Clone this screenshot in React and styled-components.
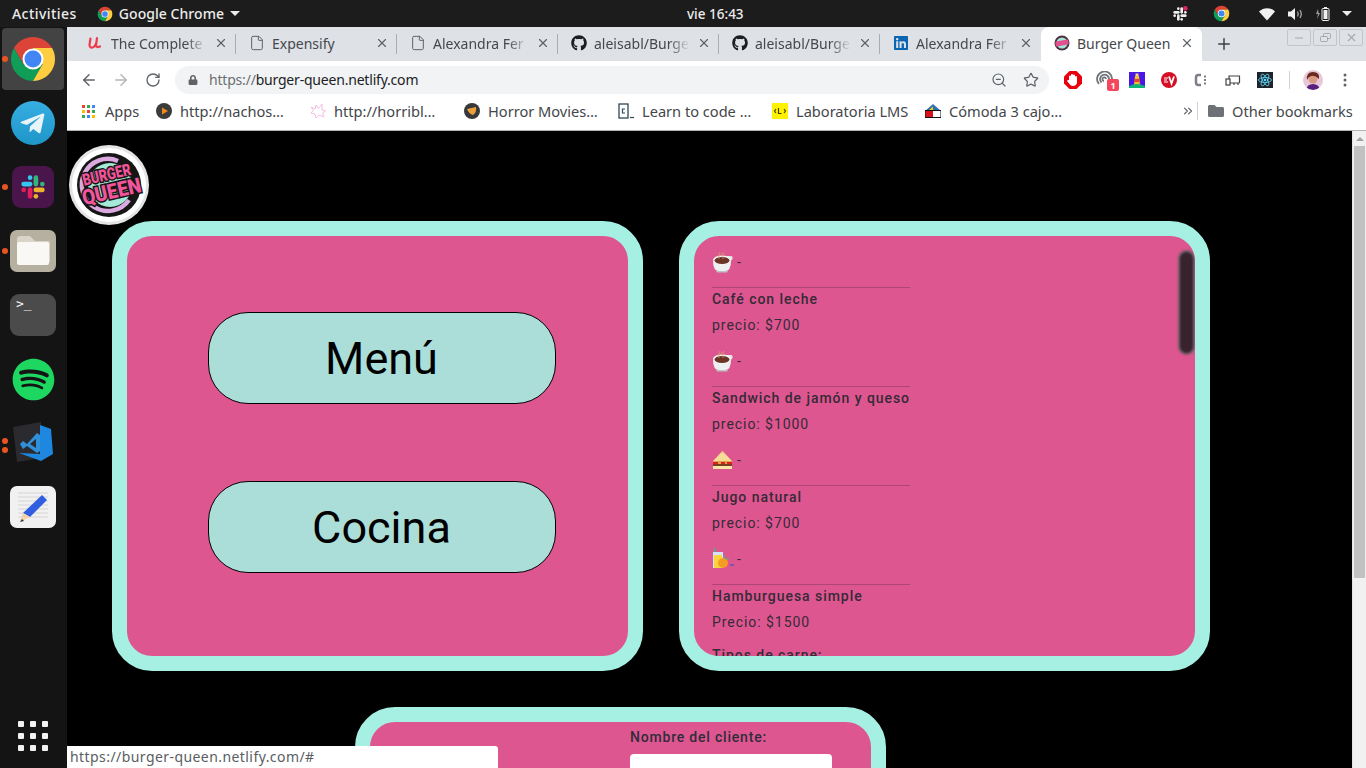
import React from 'react';
import styled, { createGlobalStyle } from 'styled-components';
import { ArrowLeft, ArrowRight, RotateCw, ZoomOut, Star, X, Plus, File, Minus, ChevronsRight } from 'lucide-react';
import { FaGithub, FaLinkedin, FaSpotify, FaTelegramPlane, FaFolder, FaLock } from 'react-icons/fa';

const GlobalStyle = createGlobalStyle`
  html, body {
    margin: 0;
    height: 100%;
    overflow: hidden;
    background: #000;
  }
  * { box-sizing: border-box; }
`;

const Root = styled.div`
  position: relative;
  width: 1366px;
  height: 768px;
  display: flex;
  flex-direction: column;
  overflow: hidden;
  font-family: "Noto Sans", "Open Sans", sans-serif;
`;

/* ---------- gnome top bar ---------- */

const TopBar = styled.div`
  height: 27px;
  flex: none;
  display: flex;
  align-items: center;
  background: #1c1c1c;
  color: #ececec;
  font-size: 14px;
  font-weight: 500;
`;

const TopLeft = styled.div`
  width: 687px;
  display: flex;
  align-items: center;
  padding-left: 12px;
`;

const Activities = styled.span`
  letter-spacing: 0.45px;
`;

const AppMenu = styled.div`
  display: flex;
  align-items: center;
  gap: 6px;
  margin-left: 20px;
  letter-spacing: 0.05px;
`;

const Caret = styled.span`
  width: 0;
  height: 0;
  border-left: 5px solid transparent;
  border-right: 5px solid transparent;
  border-top: 5px solid #ececec;
`;

const Clock = styled.div`
  width: 60px;
  white-space: nowrap;
  font-size: 13.5px;
`;

const Tray = styled.div`
  display: flex;
  align-items: center;
  margin-left: 425px;
`;

const TraySlot = styled.div`
  width: ${p => p.$w}px;
  display: flex;
  align-items: center;
`;

/* ---------- dock ---------- */

const Body = styled.div`
  flex: 1;
  min-height: 0;
  display: flex;
`;

const Dock = styled.div`
  width: 67px;
  flex: none;
  display: flex;
  flex-direction: column;
  align-items: center;
  padding-bottom: 17px;
  background: #141414;
`;

const DockItem = styled.div`
  position: relative;
  width: 67px;
  height: 64px;
  flex: none;
  display: flex;
  align-items: center;
  justify-content: center;
  padding-right: 1px;
`;

const ActiveTile = styled.div`
  width: 62px;
  height: 62px;
  display: flex;
  align-items: center;
  justify-content: center;
  background: #434343;
  border-radius: 4px;
`;

const RunDot = styled.span`
  position: absolute;
  left: 2px;
  top: ${p => p.$top}px;
  width: 6px;
  height: 6px;
  border-radius: 50%;
  background: #e95420;
`;

const RoundIcon = styled.div`
  width: 44px;
  height: 44px;
  border-radius: 50%;
  display: flex;
  align-items: center;
  justify-content: center;
  background: linear-gradient(180deg, #37aee2, #1e96c8);
  color: #e8f4fa;
  padding-right: 2px;
`;

const SquareIcon = styled.div`
  width: ${p => p.$size}px;
  height: ${p => p.$size2 || p.$size}px;
  display: flex;
  align-items: center;
  justify-content: center;
  border-radius: 9px;
  background: ${p => p.$bg};
`;

const TerminalPrompt = styled.span`
  width: 100%;
  height: 100%;
  padding: 2px 0 0 6px;
  color: #f4f4f4;
  font: 13px "DejaVu Sans Mono", monospace;
`;

const AppGrid = styled.div`
  margin-top: auto;
  padding-right: 1px;
  display: grid;
  grid-template-columns: repeat(3, 6px);
  gap: 6px;
`;

const AppDot = styled.span`
  width: 6px;
  height: 6px;
  border-radius: 1px;
  background: #f2f2f2;
`;

/* ---------- browser chrome ---------- */

const Browser = styled.div`
  flex: 1;
  min-width: 0;
  display: flex;
  flex-direction: column;
`;

const TabStrip = styled.div`
  height: 34px;
  flex: none;
  display: flex;
  padding-left: 8px;
  background: #dee1e6;
`;

const Tab = styled.div`
  position: relative;
  width: 161px;
  height: 34px;
  flex: none;
  display: flex;
  align-items: center;
  gap: 7px;
  padding: 0 8px 2px 13px;
  color: #45484c;
  font-size: 14px;
  background: ${p => (p.$active ? '#fff' : 'transparent')};
  border-radius: ${p => (p.$active ? '8px 8px 0 0' : '0')};

  &::after {
    content: '';
    display: ${p => (p.$plain ? 'none' : 'block')};
    position: absolute;
    right: 0;
    top: 7px;
    width: 1px;
    height: 20px;
    background: #a9acb1;
  }
`;

const TabTitle = styled.span`
  flex: 1;
  min-width: 0;
  overflow: hidden;
  white-space: nowrap;
  ${p => !p.$full && 'mask-image: linear-gradient(90deg, #000 78%, transparent 100%);'}
`;

const NewTab = styled.div`
  width: 44px;
  display: flex;
  align-items: center;
  justify-content: center;
  color: #3c4043;
`;

const WindowButtons = styled.div`
  display: flex;
  gap: 2px;
  margin-left: auto;
  padding: 2px 3px 0 0;
`;

const WindowButton = styled.div`
  width: 24px;
  height: 17px;
  display: flex;
  align-items: center;
  justify-content: center;
  color: #a6a8ad;
  border: 1px solid #c3c5ca;
  border-radius: 2px;
`;

const Toolbar = styled.div`
  height: 33px;
  flex: none;
  display: flex;
  padding-top: 5px;
  background: #fff;
`;

const NavButton = styled.div`
  width: 32px;
  height: 28px;
  display: flex;
  align-items: center;
  justify-content: center;
  color: ${p => (p.$off ? '#b4b7bb' : '#5f6368')};
`;

const NavGroup = styled.div`
  display: flex;
  padding-left: 6px;
  margin-right: 6px;
`;

const Omnibox = styled.div`
  width: 874px;
  height: 28px;
  display: flex;
  align-items: center;
  padding: 0 10px 0 13px;
  border-radius: 14px;
  background: #f1f3f4;
  color: #5f6368;
  font-size: 14px;
`;

const UrlText = styled.span`
  margin: 0 0 2px 11px;
  flex: 1;
  color: #6b6f73;
  letter-spacing: -0.2px;
`;

const UrlHost = styled.span`
  color: #202124;
`;

const OmniIcons = styled.div`
  display: flex;
  align-items: center;
  gap: 16px;
`;

const Extensions = styled.div`
  display: flex;
  align-items: center;
  height: 28px;
  padding-left: 8px;
`;

const ExtSlot = styled.div`
  position: relative;
  width: 32px;
  display: flex;
  align-items: center;
  justify-content: center;
`;

const CountBadge = styled.span`
  position: absolute;
  left: 18px;
  top: 8px;
  width: 12px;
  height: 12px;
  display: flex;
  align-items: center;
  justify-content: center;
  background: #f5475b;
  border-radius: 2px;
  color: #fff;
  font-size: 9px;
  font-weight: 700;
`;

const Separator = styled.span`
  width: 1px;
  height: 18px;
  margin: ${p => p.$margin};
  background: #d0d2d5;
`;

const Bookmarks = styled.div`
  height: 37px;
  flex: none;
  display: flex;
  align-items: center;
  padding: 0 0 2px 15px;
  background: #fff;
  border-bottom: 1px solid #b3b3b3;
  color: #43464a;
  font-size: 14.6px;
`;

const Bookmark = styled.div`
  width: ${p => p.$w}px;
  flex: none;
  display: flex;
  align-items: center;
  gap: 8px;
  white-space: nowrap;

  svg {
    flex: none;
  }
`;

const AppsIcon = styled.div`
  display: grid;
  grid-template-columns: repeat(3, 3px);
  gap: 2px;
  width: 13px;
  margin-right: 2px;
`;

const AppsCell = styled.span`
  width: 3px;
  height: 3px;
  background: ${p => p.$c};
`;

const MoreBookmarks = styled.div`
  width: 16px;
  display: flex;
  color: #5f6368;
`;

/* ---------- page ---------- */

const Viewport = styled.div`
  flex: 1;
  min-height: 0;
  display: flex;
`;

const Page = styled.div`
  flex: 1;
  min-width: 0;
  overflow: hidden;
  background: #000;
  font-family: Roboto, sans-serif;
`;

const PageHeader = styled.div`
  height: 90px;
  padding: 14px 0 0 1px;
`;

const PanelRow = styled.div`
  display: flex;
  gap: 36px;
  padding-left: 45px;
`;

const Panel = styled.div`
  position: relative;
  width: 531px;
  height: 450px;
  flex: none;
  overflow: hidden;
  border: 15px solid #a5f0e2;
  border-radius: 40px;
  background: #de568f;
`;

const MenuPanel = styled(Panel)`
  display: flex;
  flex-direction: column;
  align-items: center;
  justify-content: center;
  gap: 77px;
  padding: 0 0 7px 8px;
`;

const BigButton = styled.div`
  width: 348px;
  height: 92px;
  flex: none;
  display: flex;
  align-items: center;
  justify-content: center;
  background: #acded9;
  border: 1px solid #000;
  border-radius: 40px;
  color: #000;
  font-size: 45px;
`;

const OrderList = styled.div`
  width: fit-content;
  padding: 8px 0 0 18px;
  color: #352a38;
  font-size: 14px;
  letter-spacing: 0.95px;
`;

const OrderItem = styled.div`
  width: 198px;
  height: 99px;
`;

const EmojiRow = styled.div`
  height: 36px;
  margin-bottom: 7px;
  display: flex;
  align-items: center;
  gap: 3px;
`;

const Rule = styled.div`
  height: 1px;
  background: rgba(60, 30, 60, 0.3);
`;

const ItemTitle = styled.div`
  height: 22px;
  margin-top: ${p => p.$top || 0}px;
  display: flex;
  align-items: center;
  font-weight: 500;
  white-space: nowrap;
`;

const ItemPrice = styled.div`
  height: 29px;
  padding-top: 1px;
  display: flex;
  align-items: center;
`;

const ListThumb = styled.div`
  position: absolute;
  right: 0;
  top: 14px;
  width: 17px;
  height: 105px;
  background: #37222e;
  border: 2px solid #6c6068;
  border-radius: 9px;
  filter: blur(1px);
`;

const OrderPanel = styled(Panel)`
  margin: 36px 0 0 288px;
  padding: 6px 0 0 260px;
  color: #2f2c3c;
  font-size: 14px;
  font-weight: 500;
  letter-spacing: 0.8px;
`;

const FieldLabel = styled.div`
  height: 19px;
  line-height: 19px;
`;

const FieldInput = styled.div`
  width: 202px;
  height: 34px;
  margin-top: 7px;
  background: #fff;
  border-radius: 4px;
`;

const PageScrollbar = styled.div`
  width: 14px;
  flex: none;
  display: flex;
  flex-direction: column;
  align-items: center;
  background: #f1f1f1;
  border-left: 1px solid #e4e4e4;
`;

const ScrollArrow = styled.div`
  width: 0;
  height: 0;
  margin: 6px 0 5px;
  border-left: 4px solid transparent;
  border-right: 4px solid transparent;
  border-bottom: 4px solid #a3a3a3;
`;

const ScrollThumb = styled.div`
  width: 11px;
  height: 432px;
  background: #c1c1c1;
`;

const StatusBubble = styled.div`
  position: absolute;
  left: 67px;
  bottom: 0;
  width: 431px;
  height: 22px;
  padding: 0 3px;
  line-height: 21px;
  background: #fff;
  border-top-right-radius: 3px;
  color: #5a5d61;
  font-size: 14px;
  letter-spacing: 0.43px;
`;

/* ---------- drawings ---------- */

const ChromeLogo = ({ size }) => (
  <svg width={size} height={size} viewBox="0 0 48 48">
    <path d="M43.05 13A22 22 0 0 0 4.95 13L14.5 29.5 24 13Z" fill="#db4437" />
    <path d="M4.95 13A22 22 0 0 0 24 46L33.5 29.5H14.5Z" fill="#0f9d58" />
    <path d="M24 46A22 22 0 0 0 43.05 13H24L33.5 29.5Z" fill="#ffcd40" />
    <circle cx="24" cy="24" r="10.5" fill="#fff" />
    <circle cx="24" cy="24" r="8.5" fill="#4285f4" />
  </svg>
);

const SlackLogo = ({ size, mono }) => {
  const c = k => (mono ? '#f0f0f0' : k);
  return (
    <svg width={size} height={size} viewBox="0 0 24 24" strokeWidth="4" strokeLinecap="round">
      <path d="M4 9.5H9.5" stroke={c('#36c5f0')} />
      <circle cx="9.5" cy="4" r="2" fill={c('#36c5f0')} />
      <path d="M14.5 4V9.5" stroke={c('#2eb67d')} />
      <circle cx="20" cy="9.5" r="2" fill={c('#2eb67d')} />
      <path d="M14.5 14.5H20" stroke={c('#ecb22e')} />
      <circle cx="14.5" cy="20" r="2" fill={c('#ecb22e')} />
      <path d="M9.5 14.5V20" stroke={c('#e01e5a')} />
      <circle cx="4" cy="14.5" r="2" fill={c('#e01e5a')} />
      {mono && <circle cx="20" cy="3.5" r="3.5" fill="#e0245e" />}
    </svg>
  );
};

const FilesIcon = () => (
  <svg width="46" height="42" viewBox="0 0 46 42">
    <rect width="46" height="42" rx="7" fill="#b5b0a0" />
    <path d="M7 32V9a3 3 0 0 1 3-3h10l5 5h13a2 2 0 0 1 2 2v19z" fill="#d8d4c8" />
    <path d="M7 14a2 2 0 0 1 2-2h28a2 2 0 0 1 2 2v19a2 2 0 0 1-2 2H9a2 2 0 0 1-2-2z" fill="#faf8f5" />
  </svg>
);

const VsCodeIcon = () => (
  <svg width="44" height="44" viewBox="0 0 44 44">
    <path d="M2 6L30 1V37L6 41Z" fill="#2b2b2f" />
    <path d="M29 4L40 8 42 33 30 40 8 32 29 33Z" fill="#1e88e0" />
    <path d="M9 23L12 20 16 23 26 12 29 14V30L26 32 16 25 12 28ZM25 18L19 23 25 27Z" fill="#2f8fd8" />
  </svg>
);

const EditorIcon = () => (
  <svg width="46" height="42" viewBox="0 0 46 42">
    <rect width="46" height="42" rx="7" fill="#f1f1f1" />
    <path d="M8 7H38M8 11H38M8 15H38M8 19H38M8 23H38M8 27H38M8 31H38" stroke="#d4d4d4" />
    <path d="M32 9L37 14 20 31 13 27Z" fill="#2f5fe0" />
    <path d="M13 27L20 31 10 36Z" fill="#f4d3a8" />
    <path d="M12 33L10 36 14 35Z" fill="#333" />
  </svg>
);

const VsDots = () => (
  <>
    <RunDot $top={27} />
    <RunDot $top={36} />
  </>
);

const BatteryIcon = () => (
  <svg width="16" height="16" viewBox="0 0 16 16">
    <path d="M3 3L1 8H3L2 13 5 7H3.5Z" fill="#9a9a9a" />
    <rect x="7" y="2.5" width="7" height="12" rx="1" fill="none" stroke="#eee" />
    <rect x="8.5" y="4" width="4" height="9" fill="#eee" />
    <rect x="9" y="1" width="3" height="1.5" fill="#eee" />
  </svg>
);

const WifiIcon = () => (
  <svg width="16" height="14" viewBox="0 0 16 14">
    <path d="M0 4.500C4.500 0 11.500 0 16 4.500L8 13.500Z" fill="#f0f0f0" />
  </svg>
);

const SoundIcon = () => (
  <svg width="16" height="14" viewBox="0 0 16 14" fill="none">
    <path d="M0 4.500H3L7 1V13L3 9.500H0Z" fill="#f0f0f0" />
    <path d="M9.500 4.500Q11 7 9.500 9.500M12 3Q14.500 7 12 11" stroke="#a8a8a8" strokeWidth="1.300" />
  </svg>
);

const RestoreIcon = () => (
  <svg width="13" height="11" viewBox="0 0 13 11" fill="none" stroke="currentColor">
    <rect x="4.500" y="1.500" width="7" height="5" rx="1" />
    <rect x="1.500" y="4.500" width="7" height="5" rx="1" fill="#dee1e6" />
  </svg>
);

const UdemyMark = () => (
  <svg width="16" height="16" viewBox="0 0 16 16" fill="none">
    <path d="M2.500 3.500L1.500 9.500Q1.500 13 4.500 12.500Q7 12 8.500 7M9 3L8 10.500Q8.500 13 12 11.500" stroke="#ee3b4d" strokeWidth="2.200" strokeLinecap="round" />
  </svg>
);

const BurgerMark = () => (
  <svg width="16" height="16" viewBox="0 0 16 16">
    <circle cx="8" cy="8" r="7.500" fill="#4a3140" />
    <circle cx="8" cy="8" r="5.500" fill="#a5e4d8" />
    <rect x="1.500" y="5.500" width="13" height="5" rx="1" fill="#e3508f" transform="rotate(-10 8 8)" />
  </svg>
);

const StopHand = () => (
  <svg width="18" height="18" viewBox="0 0 18 18">
    <path d="M5.500 0H12.500L18 5.500V12.500L12.500 18H5.500L0 12.500V5.500Z" fill="#e8000d" />
    <path d="M5 9V5.500a1 1 0 0 1 2 0V4a1 1 0 0 1 2 0V4.500a1 1 0 0 1 2 0V6a1 1 0 0 1 2 0V12Q12 15 9 15 6.500 15 5.500 13L3 10Q3.500 8.500 5 9Z" fill="#fff" />
  </svg>
);

const SpiralExt = () => (
  <svg width="18" height="18" viewBox="0 0 18 18" fill="none" stroke="#70757a" strokeWidth="1.800">
    <path d="M3 13A7.500 7.500 0 1 1 16 9M5.500 11.500A4.500 4.500 0 1 1 13 9M8 10A1.800 1.800 0 1 1 10 8" />
  </svg>
);

const LighthouseExt = () => (
  <svg width="16" height="16" viewBox="0 0 16 16">
    <rect width="16" height="16" fill="#4b17e6" />
    <path d="M6 4H10L11 13H5Z" fill="#f0c030" />
    <path d="M5.700 7H10.300L10.600 10H5.400Z" fill="#e8402c" />
    <rect x="6.500" y="1.500" width="3" height="2.500" fill="#f7d774" />
    <path d="M0 16V14Q8 10 16 14V16Z" fill="#0fb37a" />
  </svg>
);

const VueLikeExt = () => (
  <svg width="16" height="16" viewBox="0 0 16 16">
    <circle cx="8" cy="8" r="8" fill="#d50f25" />
    <path d="M8 4.500L10.500 11.500 13 4.500" fill="none" stroke="#fff" strokeWidth="1.800" />
    <path d="M3 6H7M3 8H6M3 10H7" stroke="#fff" />
  </svg>
);

const ColonExt = () => (
  <svg width="16" height="16" viewBox="0 0 16 16" fill="none">
    <path d="M8 3H5.500Q3 3 3 5.500V10.500Q3 13 5.500 13H8" stroke="#7d8084" strokeWidth="2.500" />
    <path d="M12 3.500V5.500M12 7V9M12 10.500V12.500" stroke="#7d8084" strokeWidth="2" />
  </svg>
);

const DeviceExt = () => (
  <svg width="16" height="16" viewBox="0 0 16 16" fill="none" stroke="#444" strokeWidth="1.200">
    <path d="M4 7V4H14.500V11" />
    <rect x="1" y="7" width="4" height="6" />
    <path d="M5 11H14.500M9 11V13M13 11V13" />
  </svg>
);

const ReactExt = () => (
  <svg width="16" height="16" viewBox="0 0 16 16" fill="none" stroke="#61dafb" strokeWidth=".8">
    <rect width="16" height="16" fill="#20232a" stroke="none" />
    <circle cx="8" cy="8" r="1.300" fill="#61dafb" stroke="none" />
    <ellipse cx="8" cy="8" rx="6.500" ry="2.500" />
    <ellipse cx="8" cy="8" rx="6.500" ry="2.500" transform="rotate(60 8 8)" />
    <ellipse cx="8" cy="8" rx="6.500" ry="2.500" transform="rotate(120 8 8)" />
  </svg>
);

const Avatar = () => (
  <svg width="20" height="20" viewBox="0 0 20 20">
    <clipPath id="avatar-clip"><circle cx="10" cy="10" r="10" /></clipPath>
    <g clipPath="url(#avatar-clip)">
      <rect width="20" height="20" fill="#e8c8d8" />
      <path d="M3 20Q4 14 10 14T17 20Z" fill="#5a2080" />
      <circle cx="10" cy="9" r="4.500" fill="#d89a80" />
      <path d="M4 10Q3 2 10 2T16 9Q12 5 8 6 5 7 4 10Z" fill="#6a2a20" />
    </g>
  </svg>
);

const KebabMenu = () => (
  <svg width="4" height="14" viewBox="0 0 4 14" fill="#5f6368">
    <circle cx="2" cy="2" r="1.500" />
    <circle cx="2" cy="7" r="1.500" />
    <circle cx="2" cy="12" r="1.500" />
  </svg>
);

const NachosMark = () => (
  <svg width="16" height="16" viewBox="0 0 16 16">
    <circle cx="8" cy="8" r="8" fill="#3b3b3b" />
    <path d="M6 4.500L12 8 6 11.500Z" fill="#f08a1d" />
  </svg>
);

const SketchStar = () => (
  <svg width="16" height="16" viewBox="0 0 16 16" fill="none" stroke="#f0b8dc" strokeWidth=".9">
    <path d="M1 4L5 6 6 2 8.500 5.500 12 1 12 7 15.500 8 12.500 10 14 14 9 12 6 15 5 11 1 10 3.500 7.500Z" />
  </svg>
);

const HorrorMark = () => (
  <svg width="16" height="16" viewBox="0 0 16 16">
    <circle cx="8" cy="8" r="8" fill="#37383a" />
    <path d="M3 6L12 4Q13 9 9 12Q5 11 3 6Z" fill="#eea03c" />
  </svg>
);

const CodeMark = () => (
  <svg width="16" height="16" viewBox="0 0 16 16" fill="none" stroke="#2f4858">
    <rect x="1" y="1" width="9" height="14" strokeWidth="1.300" />
    <path d="M7 6H4.500V10H7" strokeWidth="1.200" />
    <path d="M12 14.500H16" strokeWidth="1.200" />
  </svg>
);

const LabMark = () => (
  <svg width="16" height="16" viewBox="0 0 16 16">
    <rect width="16" height="16" fill="#fff200" />
    <path d="M4 6L2.500 8 4 10M12 6L13.500 8 12 10M6.500 5V10.500H9.500" fill="none" stroke="#3a3a00" strokeWidth="1.100" />
  </svg>
);

const HouseMark = () => (
  <svg width="16" height="14" viewBox="0 0 16 14">
    <path d="M0 7L8 0 16 7Z" fill="#2f6fb5" />
    <path d="M3 7L8 2.500 8 7Z" fill="#f4d000" />
    <rect y="7" width="8" height="6" fill="#d8101c" />
    <rect x="8" y="7" width="8" height="6" fill="#fff" />
    <rect y="6.500" width="16" height="7" fill="none" stroke="#111" />
  </svg>
);

const CupEmoji = () => (
  <svg width="22" height="22" viewBox="0 0 22 22">
    <path d="M15 5H19Q21 5 20.500 8L18 11H15Z" fill="#e3e6e6" />
    <path d="M1 10Q1 20 7 20H13Q19 20 19 10Z" fill="#eef1f1" />
    <path d="M4 20H16L15 21.500H5Z" fill="#b9c4c6" />
    <ellipse cx="10" cy="9" rx="9" ry="4.500" fill="#f3f5f5" />
    <ellipse cx="10" cy="9.500" rx="7.500" ry="3.500" fill="#6b3426" />
    <path d="M7 8Q6 4 8 1M11 8Q10 4 12 1M9 5Q9 3 10 2" fill="none" stroke="#d49a70" strokeWidth=".8" />
  </svg>
);

const SandwichEmoji = () => (
  <svg width="22" height="22" viewBox="0 0 22 22">
    <path d="M10.500 2L20 12H1Z" fill="#f6dc96" />
    <path d="M10.500 2L12 3.500 9 3.500Z" fill="#e9b860" />
    <rect x="1" y="12" width="19" height="3" fill="#d9a54e" />
    <path d="M1 13H6V15H1ZM9 13H13V15H9ZM15 13H20V15H15Z" fill="#df1f1f" />
    <rect x="1" y="15" width="19" height="2" fill="#7b3f1d" />
    <rect x="1" y="17" width="19" height="3" fill="#fbe4a8" />
  </svg>
);

const JuiceEmoji = () => (
  <svg width="22" height="22" viewBox="0 0 22 22">
    <path d="M2 0L4 8" stroke="#3fbf7f" strokeWidth="1.300" />
    <rect x="1" y="4" width="10" height="16" fill="#cfe5f5" />
    <rect x="2" y="7" width="8" height="13" fill="#fbd33c" />
    <circle cx="11" cy="15" r="5" fill="#f59d22" />
    <path d="M12 10L12 7M13 11L17 11" stroke="#3fbf7f" />
    <path d="M18 17H22" stroke="#2a50d0" />
  </svg>
);

const BurgerLogo = () => (
  <svg width="82" height="82" viewBox="0 0 82 82">
    <circle cx="41" cy="40" r="40" fill="#e4e4e4" />
    <circle cx="41" cy="40" r="37" fill="#fff" />
    <circle cx="41" cy="40" r="32" fill="#161616" />
    <path d="M61 55A26 26 0 1 1 50 16" fill="none" stroke="#dca8e0" strokeWidth="4.500" />
    <circle cx="42" cy="40" r="22" fill="#a5ead8" />
    <g transform="rotate(-13 41 40)" fontFamily="Roboto, sans-serif" fontWeight="900" fill="#f2559c" stroke="#161616" strokeWidth="3" paintOrder="stroke" textAnchor="middle">
      <text x="41" y="35" fontSize="16.500" textLength="49" lengthAdjust="spacingAndGlyphs">BURGER</text>
      <text x="42" y="54" fontSize="21" textLength="60" lengthAdjust="spacingAndGlyphs">QUEEN</text>
    </g>
  </svg>
);

/* ---------- data ---------- */

const TABS = [
  { icon: <UdemyMark />, title: 'The Complete' },
  { icon: <File size={16} strokeWidth={1.500} color="#5f6368" />, title: 'Expensify', full: true },
  { icon: <File size={16} strokeWidth={1.500} color="#5f6368" />, title: 'Alexandra Fer' },
  { icon: <FaGithub size={16} color="#1b1f23" />, title: 'aleisabl/Burge' },
  { icon: <FaGithub size={16} color="#1b1f23" />, title: 'aleisabl/Burge' },
  { icon: <FaLinkedin size={16} color="#0a66b2" />, title: 'Alexandra Fer' },
  { icon: <BurgerMark />, title: 'Burger Queen', active: true, full: true },
];

const BOOKMARKS = [
  { w: 154, icon: <NachosMark />, label: 'http://nachos…' },
  { w: 154, icon: <SketchStar />, label: 'http://horribl…' },
  { w: 154, icon: <HorrorMark />, label: 'Horror Movies…' },
  { w: 154, icon: <CodeMark />, label: 'Learn to code …' },
  { w: 153, icon: <LabMark />, label: 'Laboratoria LMS' },
  { w: 256, icon: <HouseMark />, label: 'Cómoda 3 cajo…' },
];

const APP_COLORS = ['#ea4335', '#34a853', '#4285f4', '#fbbc05', '#ea4335', '#34a853', '#34a853', '#4285f4', '#fbbc05'];

const ORDER_ITEMS = [
  { emoji: <CupEmoji />, title: 'Café con leche', price: 'precio: $700' },
  { emoji: <CupEmoji />, title: 'Sandwich de jamón y queso', price: 'precio: $1000' },
  { emoji: <SandwichEmoji />, title: 'Jugo natural', price: 'precio: $700' },
  { emoji: <JuiceEmoji />, title: 'Hamburguesa simple', price: 'Precio: $1500' },
];

const App = () => (
  <Root>
    <GlobalStyle />
    <TopBar>
      <TopLeft>
        <Activities>Activities</Activities>
        <AppMenu>
          <ChromeLogo size={16} />
          Google Chrome
          <Caret />
        </AppMenu>
      </TopLeft>
      <Clock>vie 16:43</Clock>
      <Tray>
        <TraySlot $w={41}><SlackLogo size={16} mono /></TraySlot>
        <TraySlot $w={46}><ChromeLogo size={17} /></TraySlot>
        <TraySlot $w={29}><WifiIcon /></TraySlot>
        <TraySlot $w={27}><SoundIcon /></TraySlot>
        <TraySlot $w={27}><BatteryIcon /></TraySlot>
        <Caret />
      </Tray>
    </TopBar>

    <Body>
      <Dock>
        <DockItem><ActiveTile><ChromeLogo size={48} /></ActiveTile><RunDot $top={29} /></DockItem>
        <DockItem><RoundIcon><FaTelegramPlane size={27} /></RoundIcon></DockItem>
        <DockItem><SquareIcon $size={42} $bg="#4a154b"><SlackLogo size={28} /></SquareIcon><RunDot $top={29} /></DockItem>
        <DockItem><FilesIcon /><RunDot $top={29} /></DockItem>
        <DockItem><SquareIcon $size={46} $size2={42} $bg="#4b4b4b"><TerminalPrompt>&gt;_</TerminalPrompt></SquareIcon></DockItem>
        <DockItem><FaSpotify size={43} color="#1ed760" /></DockItem>
        <DockItem><VsCodeIcon /><VsDots /></DockItem>
        <DockItem><EditorIcon /></DockItem>
        <AppGrid>
          {Array.from({ length: 9 }, (_, i) => <AppDot key={i} />)}
        </AppGrid>
      </Dock>

      <Browser>
        <TabStrip>
          {TABS.map((tab, i) => (
            <Tab key={i} $active={tab.active} $plain={tab.active || i === 5}>
              {tab.icon}
              <TabTitle $full={tab.full}>{tab.title}</TabTitle>
              <X size={14} strokeWidth={2} color="#5f6368" />
            </Tab>
          ))}
          <NewTab><Plus size={18} strokeWidth={2} /></NewTab>
          <WindowButtons>
            <WindowButton><Minus size={12} /></WindowButton>
            <WindowButton><RestoreIcon /></WindowButton>
            <WindowButton><X size={13} /></WindowButton>
          </WindowButtons>
        </TabStrip>

        <Toolbar>
          <NavGroup>
            <NavButton><ArrowLeft size={18} strokeWidth={2} /></NavButton>
            <NavButton $off><ArrowRight size={18} strokeWidth={2} /></NavButton>
            <NavButton><RotateCw size={16} strokeWidth={2} /></NavButton>
          </NavGroup>
          <Omnibox>
            <FaLock size={10} />
            <UrlText>https://<UrlHost>burger-queen.netlify.com</UrlHost></UrlText>
            <OmniIcons>
              <ZoomOut size={16} strokeWidth={1.800} />
              <Star size={16} strokeWidth={1.800} />
            </OmniIcons>
          </Omnibox>
          <Extensions>
            <ExtSlot><StopHand /></ExtSlot>
            <ExtSlot><SpiralExt /><CountBadge>1</CountBadge></ExtSlot>
            <ExtSlot><LighthouseExt /></ExtSlot>
            <ExtSlot><VueLikeExt /></ExtSlot>
            <ExtSlot><ColonExt /></ExtSlot>
            <ExtSlot><DeviceExt /></ExtSlot>
            <ExtSlot><ReactExt /></ExtSlot>
            <Separator $margin="0 7px 0 8px" />
            <ExtSlot><Avatar /></ExtSlot>
            <ExtSlot><KebabMenu /></ExtSlot>
          </Extensions>
        </Toolbar>

        <Bookmarks>
          <Bookmark $w={74}>
            <AppsIcon>
              {APP_COLORS.map((c, i) => <AppsCell key={i} $c={c} />)}
            </AppsIcon>
            Apps
          </Bookmark>
          {BOOKMARKS.map(b => (
            <Bookmark key={b.label} $w={b.w}>{b.icon}{b.label}</Bookmark>
          ))}
          <MoreBookmarks><ChevronsRight size={14} /></MoreBookmarks>
          <Separator $margin="0 10px 0 0" />
          <Bookmark $w={146}><FaFolder size={16} color="#6e7276" />Other bookmarks</Bookmark>
        </Bookmarks>

        <Viewport>
          <Page>
            <PageHeader><BurgerLogo /></PageHeader>
            <PanelRow>
              <MenuPanel>
                <BigButton>Menú</BigButton>
                <BigButton>Cocina</BigButton>
              </MenuPanel>
              <Panel>
                <OrderList>
                  {ORDER_ITEMS.map((item, i) => (
                    <OrderItem key={i}>
                      <EmojiRow>{item.emoji}-</EmojiRow>
                      <Rule />
                      <ItemTitle>{item.title}</ItemTitle>
                      <ItemPrice>{item.price}</ItemPrice>
                    </OrderItem>
                  ))}
                  <ItemTitle $top={4}>Tipos de carne:</ItemTitle>
                </OrderList>
                <ListThumb />
              </Panel>
            </PanelRow>
            <OrderPanel>
              <FieldLabel>Nombre del cliente:</FieldLabel>
              <FieldInput />
            </OrderPanel>
          </Page>
          <PageScrollbar>
            <ScrollArrow />
            <ScrollThumb />
          </PageScrollbar>
        </Viewport>
      </Browser>
    </Body>

    <StatusBubble>https://burger-queen.netlify.com/#</StatusBubble>
  </Root>
);

export default App;
